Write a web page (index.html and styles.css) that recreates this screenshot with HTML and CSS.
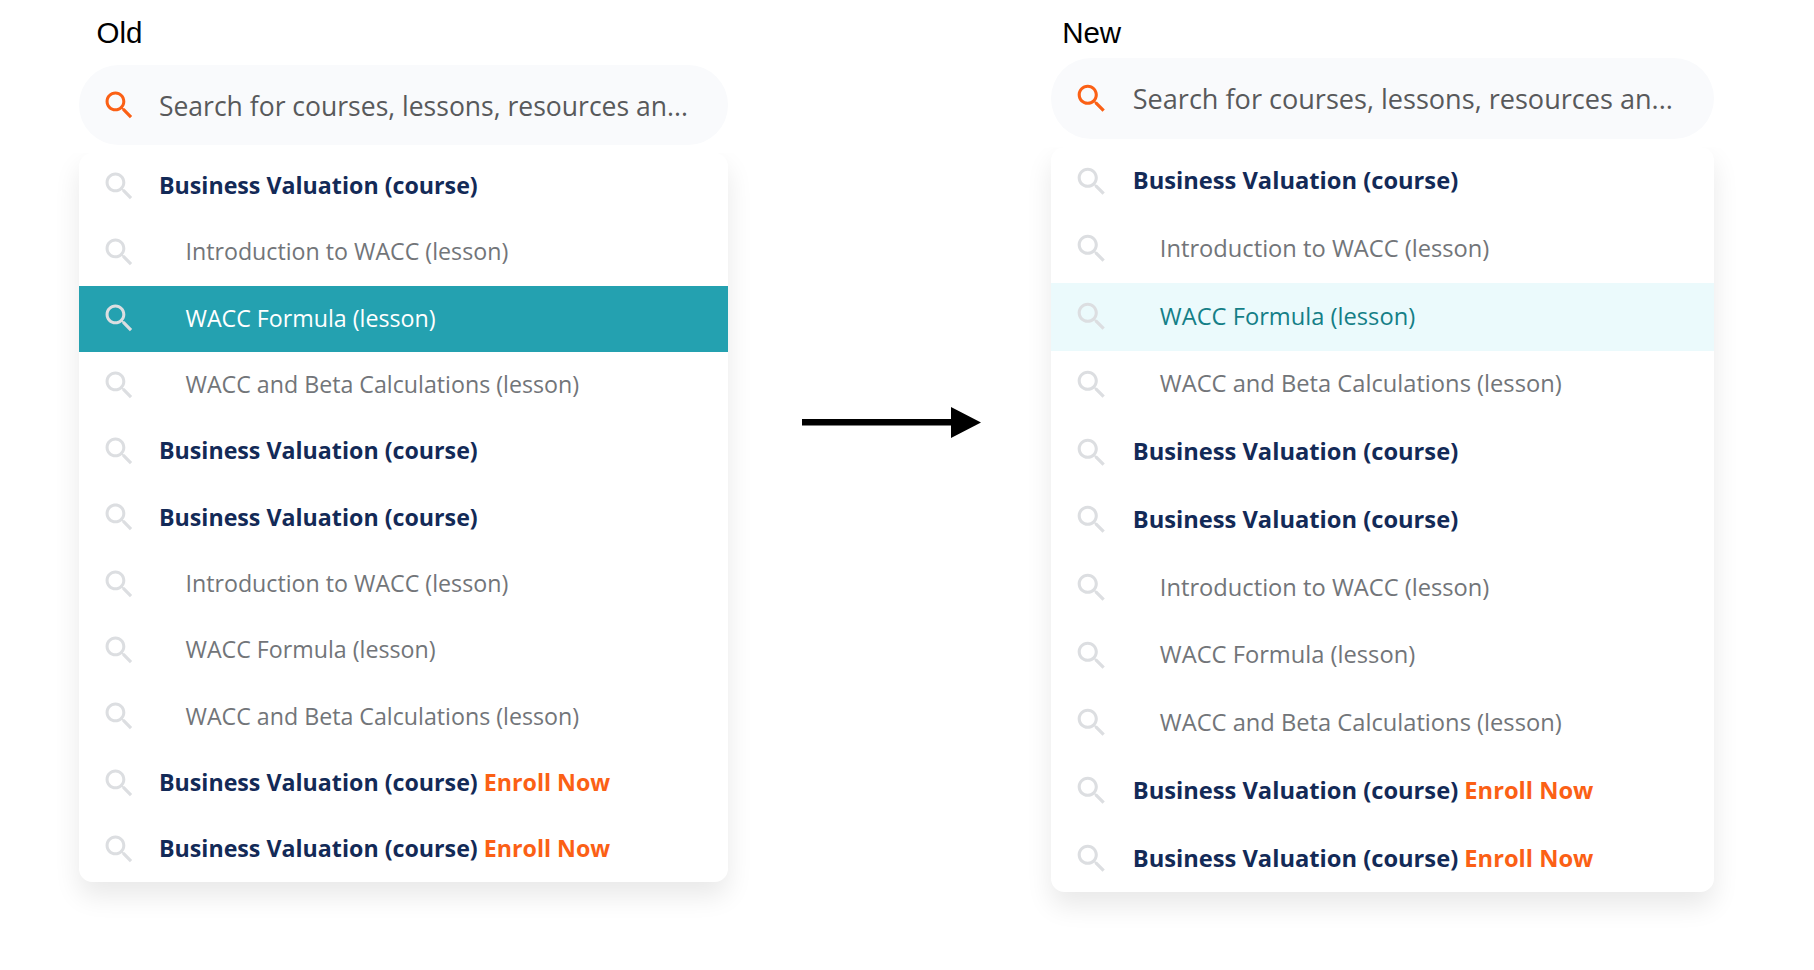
FILE: index.html
```html
<!DOCTYPE html>
<html lang="en">
<head>
<meta charset="utf-8">
<title>Search suggestions: old and new</title>
<link rel="stylesheet" href="styles.css">
</head>
<body>
<svg class="defs" width="0" height="0" aria-hidden="true">
  <symbol id="search" viewBox="0 0 24 24">
    <path d="M15.5 14h-.79l-.28-.27C15.41 12.59 16 11.11 16 9.5 16 5.91 13.09 3 9.5 3S3 5.91 3 9.5 5.91 16 9.5 16c1.61 0 3.09-.59 4.23-1.57l.27.28v.79l5 4.99L20.49 19l-4.99-5zm-6 0C7.01 14 5 11.99 5 9.5S7.01 5 9.5 5 14 7.01 14 9.5 11.99 14 9.5 14z"/>
  </symbol>
</svg>
<main class="board">
  <section class="variant variant-old">
    <h2 class="label">Old</h2>
    <div class="search-bar"><svg class="icon"><use href="#search"/></svg><span class="placeholder">Search for courses, lessons, resources an...</span></div>
    <ul class="results">
      <li class="row course"><svg class="icon"><use href="#search"/></svg><span class="text">Business Valuation (course)</span></li>
      <li class="row lesson"><svg class="icon"><use href="#search"/></svg><span class="text">Introduction to WACC (lesson)</span></li>
      <li class="row lesson active"><svg class="icon"><use href="#search"/></svg><span class="text">WACC Formula (lesson)</span></li>
      <li class="row lesson"><svg class="icon"><use href="#search"/></svg><span class="text">WACC and Beta Calculations (lesson)</span></li>
      <li class="row course"><svg class="icon"><use href="#search"/></svg><span class="text">Business Valuation (course)</span></li>
      <li class="row course"><svg class="icon"><use href="#search"/></svg><span class="text">Business Valuation (course)</span></li>
      <li class="row lesson"><svg class="icon"><use href="#search"/></svg><span class="text">Introduction to WACC (lesson)</span></li>
      <li class="row lesson"><svg class="icon"><use href="#search"/></svg><span class="text">WACC Formula (lesson)</span></li>
      <li class="row lesson"><svg class="icon"><use href="#search"/></svg><span class="text">WACC and Beta Calculations (lesson)</span></li>
      <li class="row course"><svg class="icon"><use href="#search"/></svg><span class="text">Business Valuation (course) <b class="enroll">Enroll Now</b></span></li>
      <li class="row course"><svg class="icon"><use href="#search"/></svg><span class="text">Business Valuation (course) <b class="enroll">Enroll Now</b></span></li>
    </ul>
  </section>
  <svg class="arrow" viewBox="0 0 180 32"><path d="M0 13H149V1L179 16.500L149 32V19.500H0z"/></svg>
  <section class="variant variant-new">
    <h2 class="label">New</h2>
    <div class="search-bar"><svg class="icon"><use href="#search"/></svg><span class="placeholder">Search for courses, lessons, resources an...</span></div>
    <ul class="results">
      <li class="row course"><svg class="icon"><use href="#search"/></svg><span class="text">Business Valuation (course)</span></li>
      <li class="row lesson"><svg class="icon"><use href="#search"/></svg><span class="text">Introduction to WACC (lesson)</span></li>
      <li class="row lesson active"><svg class="icon"><use href="#search"/></svg><span class="text">WACC Formula (lesson)</span></li>
      <li class="row lesson"><svg class="icon"><use href="#search"/></svg><span class="text">WACC and Beta Calculations (lesson)</span></li>
      <li class="row course"><svg class="icon"><use href="#search"/></svg><span class="text">Business Valuation (course)</span></li>
      <li class="row course"><svg class="icon"><use href="#search"/></svg><span class="text">Business Valuation (course)</span></li>
      <li class="row lesson"><svg class="icon"><use href="#search"/></svg><span class="text">Introduction to WACC (lesson)</span></li>
      <li class="row lesson"><svg class="icon"><use href="#search"/></svg><span class="text">WACC Formula (lesson)</span></li>
      <li class="row lesson"><svg class="icon"><use href="#search"/></svg><span class="text">WACC and Beta Calculations (lesson)</span></li>
      <li class="row course"><svg class="icon"><use href="#search"/></svg><span class="text">Business Valuation (course) <b class="enroll">Enroll Now</b></span></li>
      <li class="row course"><svg class="icon"><use href="#search"/></svg><span class="text">Business Valuation (course) <b class="enroll">Enroll Now</b></span></li>
    </ul>
  </section>
</main>
</body>
</html>
```

FILE: styles.css
```css
* { box-sizing: border-box; }

body {
  margin: 0;
  background: #fff;
  font-family: "Open Sans", "Noto Sans", sans-serif;
}

.defs { display: block; }

.board {
  display: flex;
  align-items: flex-start;
  height: 970px;
  padding-left: 79px;
  overflow: hidden;
}

/* --u is one design pixel at the variant's zoom level */
.variant { width: calc(391.4 * var(--u)); }
.variant-old { --u: 1.6585px; --bar-gap: 15px; --label-inset: 17.5px; }
.variant-new { --u: 1.6935px; --bar-gap: 7.6px; --label-inset: 11px; }

.label {
  margin: 0 0 var(--bar-gap) var(--label-inset);
  padding-top: 15px;
  font: 400 29.5px/35px "Liberation Sans", Arial, sans-serif;
  color: #000;
}

.icon {
  flex: none;
  width: calc(22 * var(--u));
  height: calc(22 * var(--u));
  margin-right: calc(13 * var(--u));
  fill: #dcdee1;
}

.search-bar {
  display: flex;
  align-items: center;
  height: calc(48 * var(--u));
  padding-left: calc(13.200 * var(--u));
  border-radius: calc(24 * var(--u));
  background: #f9fafc;
  color: #58595b;
  font-size: calc(16 * var(--u));
  white-space: nowrap;
}

.search-bar .icon { fill: #fb6015; }
.variant-old .placeholder { padding-top: 1.5px; }

.results {
  margin: calc(5 * var(--u)) 0 0;
  padding: 0;
  list-style: none;
  border-radius: calc(8 * var(--u));
  background: #fff;
  box-shadow: 0 calc(8 * var(--u)) calc(16 * var(--u)) rgba(0, 0, 0, .09);
  /* keeps the shadow off the search bar above */
  clip-path: inset(0 -60px -80px);
}

.row {
  display: flex;
  align-items: center;
  height: calc(40 * var(--u));
  padding-left: calc(13.200 * var(--u));
  font-size: calc(14 * var(--u));
  white-space: nowrap;
}

.text { padding-bottom: 2px; }
.course { color: #132a57; font-weight: 700; }
.lesson { color: #727579; }
.lesson .text { padding-left: calc(16 * var(--u)); }
.enroll { color: #fb6015; font-weight: 700; }

.variant-old .active { background: #24a1b0; color: #fff; }
.variant-new .active { background: #ebfafc; color: #147f87; }

.arrow {
  flex: none;
  width: 180px;
  height: 32px;
  margin: 405.500px 69.500px 0 73.500px;
}
```
